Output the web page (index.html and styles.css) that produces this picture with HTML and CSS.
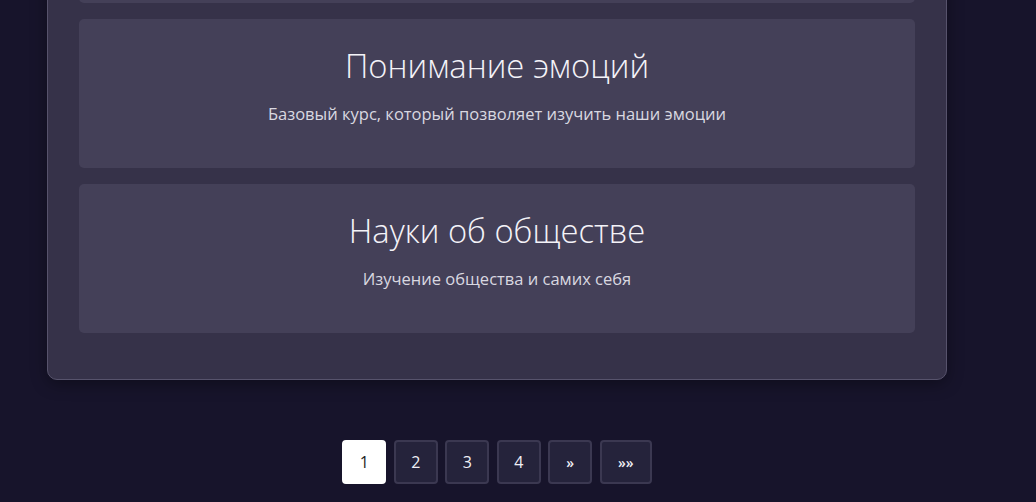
FILE: index.html
```html
<!DOCTYPE html>
<html lang="ru">
<head>
<meta charset="utf-8">
<title>Курсы</title>
<link rel="stylesheet" href="styles.css">
</head>
<body>
<main class="page">
  <section class="panel">
    <article class="card card-hidden" aria-hidden="true"></article>
    <article class="card">
      <h2 class="card-title">Понимание эмоций</h2>
      <p class="card-text">Базовый курс, который позволяет изучить наши эмоции</p>
    </article>
    <article class="card">
      <h2 class="card-title">Науки об обществе</h2>
      <p class="card-text">Изучение общества и самих себя</p>
    </article>
  </section>
  <nav class="pager">
    <a class="page-btn active">1</a>
    <a class="page-btn">2</a>
    <a class="page-btn">3</a>
    <a class="page-btn">4</a>
    <a class="page-btn small">»</a>
    <a class="page-btn small wide">»»</a>
  </nav>
</main>
</body>
</html>
```
FILE: styles.css
```css
html, body {
  margin: 0;
  padding: 0;
  background: #17142b;
  height: 100%;
  overflow: hidden;
}
body {
  font-family: "Open Sans", "Noto Sans", "Liberation Sans", sans-serif;
  color: #f2f1f6;
}
.page {
  width: 994px;
  display: flex;
  flex-direction: column;
  align-items: center;
}
.panel {
  width: 900px;
  box-sizing: border-box;
  margin-top: -178px;
  background: #363249;
  border: 1px solid #57536c;
  border-radius: 10px;
  padding: 31px 31px 46px;
  display: flex;
  flex-direction: column;
  gap: 16px;
  box-shadow: 0 4px 16px rgba(0, 0, 0, 0.35);
}
.card {
  height: 149px;
  box-sizing: border-box;
  background: #444058;
  border-radius: 5px;
  padding-top: 27px;
  text-align: center;
}
.card-title {
  margin: 0;
  font-weight: 300;
  font-size: 32.75px;
  line-height: 40px;
  color: #f4f3f8;
}
.card-text {
  margin: 16px 0 0;
  font-size: 16.5px;
  line-height: 24px;
  color: #d9d8e0;
}
.pager {
  margin-top: 60px;
  display: flex;
  gap: 7.5px;
}
.page-btn {
  width: 44px;
  height: 44px;
  box-sizing: border-box;
  display: flex;
  align-items: center;
  justify-content: center;
  background: #25233b;
  border: 2px solid #3b3851;
  border-radius: 4px;
  color: #f0eff5;
  font-size: 16px;
}
.page-btn.active {
  background: #ffffff;
  border-color: #ffffff;
  color: #222;
}
.page-btn.small {
  font-size: 14px;
  font-weight: 600;
}
.page-btn.wide {
  width: 52px;
}
```
